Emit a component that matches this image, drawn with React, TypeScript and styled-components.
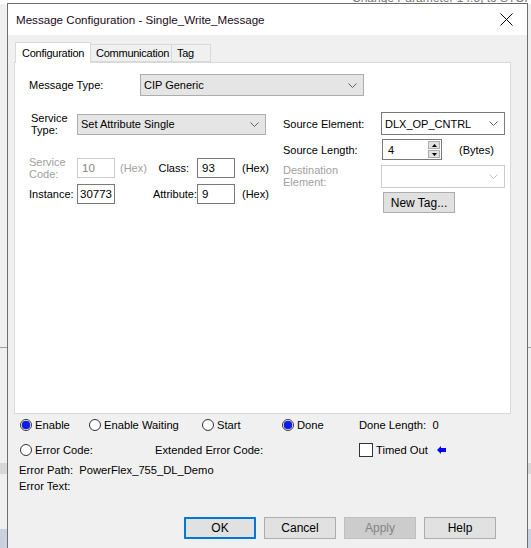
import React from 'react';
import styled, { createGlobalStyle } from 'styled-components';

const GlobalStyle = createGlobalStyle`
  html, body {
    margin: 0;
    padding: 0;
    width: 531px;
    height: 548px;
    overflow: hidden;
  }
  body {
    font-family: 'Liberation Sans', Arial, sans-serif;
    font-size: 11px;
    color: #000;
    background:
      linear-gradient(to bottom,
        #ffffff 0px, #ffffff 4px,
        #f0f0f0 4px, #f0f0f0 347px,
        #a0a0a0 347px, #a0a0a0 348px,
        #f0f0f0 348px, #f0f0f0 463px,
        #d8d8d8 463px, #d8d8d8 474px,
        #f0f0f0 474px, #f0f0f0 529px,
        #c9d2de 529px, #c9d2de 548px);
  }
`;

const Desktop = styled.div`
  position: relative;
  width: 531px;
  height: 548px;
  overflow: hidden;
`;

const DesktopText = styled.div`
  padding-left: 352px;
  margin-top: -9px;
  font-size: 12px;
  color: #7a7a7a;
  white-space: nowrap;
`;

const Window = styled.div`
  position: absolute;
  left: 7px;
  top: 3px;
  width: 519px;
  height: 570px;
  border: 1px solid #6e6e6e;
  background: #f0f0f0;
  display: flex;
  flex-direction: column;
`;

const TitleBar = styled.div`
  height: 31px;
  background: #fff;
  display: flex;
  align-items: center;
  justify-content: space-between;
  padding: 0 14px 0 8px;
  font-size: 11.6px;
  color: #1a0a1a;
`;

const CloseButton = styled.div`
  width: 14px;
  height: 14px;
  display: flex;
  align-items: center;
  justify-content: center;
`;

const Body = styled.div`
  padding: 7px 16px 0 6px;
  display: flex;
  flex-direction: column;
`;

const TabStrip = styled.div`
  display: flex;
  align-items: flex-end;
  height: 20px;
  padding-left: 1px;
`;

const Tab = styled.div<{ $active?: boolean; $w: number }>`
  width: ${(p) => p.$w}px;
  height: ${(p) => (p.$active ? 21 : 18)}px;
  margin-bottom: ${(p) => (p.$active ? -1 : 0)}px;
  margin-left: ${(p) => (p.$active ? 0 : -1)}px;
  box-sizing: border-box;
  border: 1px solid #d9d9d9;
  border-bottom: ${(p) => (p.$active ? 'none' : '1px solid #d9d9d9')};
  background: ${(p) => (p.$active ? '#fff' : '#f0f0f0')};
  position: relative;
  z-index: ${(p) => (p.$active ? 2 : 1)};
  display: flex;
  align-items: center;
  padding-left: ${(p) => (p.$active ? 6 : 5)}px;
  font-size: 11px;
  letter-spacing: -0.25px;
  white-space: nowrap;
  overflow: hidden;
`;

const Panel = styled.div`
  height: 339px;
  border: 1px solid #d9d9d9;
  background: #fff;
  position: relative;
  z-index: 1;
  padding: 11px 0 0 14px;
`;

const Row = styled.div`
  display: flex;
  align-items: center;
`;

const Label = styled.div<{ $w?: number; $disabled?: boolean }>`
  width: ${(p) => (p.$w ? `${p.$w}px` : 'auto')};
  flex-shrink: 0;
  color: ${(p) => (p.$disabled ? '#a0a0a0' : '#000')};
  line-height: 12px;
  white-space: nowrap;
`;

const Combo = styled.div<{ $w: number; $h: number; $variant: 'gray' | 'white' | 'disabled' }>`
  width: ${(p) => p.$w}px;
  height: ${(p) => p.$h}px;
  box-sizing: border-box;
  border: 1px solid
    ${(p) => (p.$variant === 'gray' ? '#adadad' : p.$variant === 'white' ? '#7a7a7a' : '#cccccc')};
  background: ${(p) => (p.$variant === 'gray' ? '#e5e5e5' : '#fff')};
  display: flex;
  align-items: center;
  justify-content: space-between;
  padding: 0 6px 0 3px;
`;

const Columns = styled.div`
  display: flex;
  margin-top: 16px;
`;

const LeftColumn = styled.div`
  width: 254px;
  display: flex;
  flex-direction: column;
`;

const RightColumn = styled.div`
  display: flex;
  flex-direction: column;
  gap: 4px;
`;

const FieldGrid = styled.div`
  display: grid;
  grid-template-columns: 48px 38px 82px 38px auto;
  grid-auto-rows: 20px;
  row-gap: 6px;
  margin-top: 22px;
  align-items: center;
`;

const TextBox = styled.div<{ $disabled?: boolean }>`
  height: 20px;
  box-sizing: border-box;
  border: 1px solid ${(p) => (p.$disabled ? '#cccccc' : '#7a7a7a')};
  background: #fff;
  color: ${(p) => (p.$disabled ? '#838383' : '#000')};
  display: flex;
  align-items: center;
  padding-left: 4px;
  font-size: 11.5px;
`;

const MidCell = styled.div`
  display: flex;
  align-items: center;
  justify-content: space-between;
  padding: 0 8px 0 5px;
`;

const RightCell = styled.div`
  display: flex;
  justify-content: flex-end;
  padding-right: 8px;
  width: 100%;
`;

const HexCell = styled.div`
  padding-left: 7px;
`;

const Spinner = styled.div`
  width: 60px;
  height: 21px;
  margin-left: 1px;
  box-sizing: border-box;
  border: 1px solid #7a7a7a;
  background: #fff;
  display: flex;
  align-items: center;
  justify-content: space-between;
  padding: 1px 1px 1px 5px;
`;

const SpinButtons = styled.div`
  width: 12px;
  height: 17px;
  display: flex;
  flex-direction: column;
  gap: 1px;
`;

const SpinButton = styled.div`
  flex: 1;
  background: #e1e1e1;
  border: 1px solid #adadad;
  display: flex;
  align-items: center;
  justify-content: center;
`;

const PushButton = styled.div<{ $w: number; $h: number; $default?: boolean; $disabled?: boolean }>`
  width: ${(p) => p.$w}px;
  height: ${(p) => p.$h}px;
  box-sizing: border-box;
  border: ${(p) => (p.$default ? '2px solid #0078d7' : p.$disabled ? '1px solid #bfbfbf' : '1px solid #adadad')};
  background: ${(p) => (p.$disabled ? '#cccccc' : '#e1e1e1')};
  color: ${(p) => (p.$disabled ? '#838383' : '#000')};
  display: flex;
  align-items: center;
  justify-content: center;
  font-size: 12px;
`;

const StatusArea = styled.div`
  padding-left: 6px;
  display: flex;
  flex-direction: column;
`;

const RadioGrid = styled.div`
  display: grid;
  grid-template-columns: 69px 113px 80px 77px auto;
  height: 14px;
  margin-top: 4px;
  align-items: center;
`;

const StatusRow = styled.div`
  display: flex;
  align-items: center;
  height: 16px;
  margin-top: 10px;
`;

const Option = styled.div<{ $w?: number }>`
  display: flex;
  align-items: center;
  gap: 3px;
  width: ${(p) => (p.$w ? `${p.$w}px` : 'auto')};
  flex-shrink: 0;
  white-space: nowrap;
  font-size: 11.2px;
`;

const CheckBox = styled.div`
  width: 14px;
  height: 14px;
  box-sizing: border-box;
  border: 1px solid #333;
  background: #fff;
`;

const InfoLine = styled.div<{ $top: number }>`
  margin-top: ${(p) => p.$top}px;
  padding-left: 5px;
  line-height: 14px;
  font-size: 11.2px;
  white-space: nowrap;
`;

const ButtonRow = styled.div`
  display: flex;
  justify-content: flex-end;
  gap: 8px;
  margin-top: 24px;
  padding-right: 15px;
`;

const Chevron: React.FC<{ color?: string }> = ({ color = '#606060' }) => (
  <svg width="9" height="5" viewBox="0 0 9 5">
    <path d="M0.5 0.5 L4.5 4.5 L8.5 0.5" fill="none" stroke={color} strokeWidth="1" />
  </svg>
);

const Radio: React.FC<{ checked?: boolean }> = ({ checked }) => (
  <svg width="12" height="12" viewBox="0 0 12 12">
    <circle cx="6" cy="6" r="5.5" fill="#fff" stroke="#333" strokeWidth="1" />
    {checked && <circle cx="6" cy="6" r="4" fill="#0a1aff" stroke="#1a1a80" strokeWidth="0.6" />}
  </svg>
);

const BlueArrow = () => (
  <svg width="9" height="8" viewBox="0 0 9 8" style={{ marginLeft: 6 }}>
    <path d="M0 4 L4 0 L4 2 L9 2 L9 6 L4 6 L4 8 Z" fill="#0000ff" />
  </svg>
);

const App: React.FC = () => {
  return (
    <>
      <GlobalStyle />
      <Desktop>
        <DesktopText>Change Parameter 14:5] to STOP to</DesktopText>
        <Window>
          <TitleBar>
            <span>Message Configuration - Single_Write_Message</span>
            <CloseButton>
              <svg width="13" height="13" viewBox="0 0 13 13">
                <path d="M0.5 0.5 L12.5 12.5 M12.5 0.5 L0.5 12.5" stroke="#000" strokeWidth="1" />
              </svg>
            </CloseButton>
          </TitleBar>

          <Body>
            <TabStrip>
              <Tab $active $w={76}>Configuration</Tab>
              <Tab $w={82}>Communication</Tab>
              <Tab $w={40}>Tag</Tab>
            </TabStrip>

            <Panel>
              <Row>
                <Label $w={111}>Message Type:</Label>
                <Combo $w={224} $h={22} $variant="gray">
                  <span>CIP Generic</span>
                  <Chevron />
                </Combo>
              </Row>

              <Columns>
                <LeftColumn>
                  <Row>
                    <Label $w={48} style={{ paddingLeft: 2, boxSizing: 'border-box' }}>
                      Service
                      <br />
                      Type:
                    </Label>
                    <Combo $w={189} $h={21} $variant="gray">
                      <span>Set Attribute Single</span>
                      <Chevron />
                    </Combo>
                  </Row>

                  <FieldGrid>
                    <Label $disabled>
                      Service
                      <br />
                      Code:
                    </Label>
                    <TextBox $disabled>10</TextBox>
                    <MidCell>
                      <Label $disabled>(Hex)</Label>
                      <Label>Class:</Label>
                    </MidCell>
                    <TextBox>93</TextBox>
                    <HexCell>(Hex)</HexCell>

                    <Label>Instance:</Label>
                    <TextBox style={{ paddingLeft: 2 }}>30773</TextBox>
                    <RightCell>
                      <Label>Attribute:</Label>
                    </RightCell>
                    <TextBox>9</TextBox>
                    <HexCell>(Hex)</HexCell>
                  </FieldGrid>
                </LeftColumn>

                <RightColumn>
                  <Row>
                    <Label $w={98}>Source Element:</Label>
                    <Combo $w={124} $h={23} $variant="white">
                      <span>DLX_OP_CNTRL</span>
                      <Chevron />
                    </Combo>
                  </Row>
                  <Row>
                    <Label $w={98}>Source Length:</Label>
                    <Spinner>
                      <span>4</span>
                      <SpinButtons>
                        <SpinButton>
                          <svg width="5" height="3" viewBox="0 0 5 3">
                            <path d="M0 3 L2.5 0 L5 3 Z" fill="#000" />
                          </svg>
                        </SpinButton>
                        <SpinButton>
                          <svg width="5" height="3" viewBox="0 0 5 3">
                            <path d="M0 0 L2.5 3 L5 0 Z" fill="#000" />
                          </svg>
                        </SpinButton>
                      </SpinButtons>
                    </Spinner>
                    <Label style={{ marginLeft: 17 }}>(Bytes)</Label>
                  </Row>
                  <Row>
                    <Label $w={98} $disabled>
                      Destination
                      <br />
                      Element:
                    </Label>
                    <Combo $w={124} $h={23} $variant="disabled">
                      <span />
                      <Chevron color="#c0c0c0" />
                    </Combo>
                  </Row>
                  <Row style={{ paddingLeft: 100 }}>
                    <PushButton $w={72} $h={21}>
                      New Tag...
                    </PushButton>
                  </Row>
                </RightColumn>
              </Columns>
            </Panel>

            <StatusArea>
              <RadioGrid>
                <Option>
                  <Radio checked />
                  Enable
                </Option>
                <Option>
                  <Radio />
                  Enable Waiting
                </Option>
                <Option>
                  <Radio />
                  Start
                </Option>
                <Option>
                  <Radio checked />
                  Done
                </Option>
                <Option>
                  Done Length:&nbsp;&nbsp;0
                </Option>
              </RadioGrid>

              <StatusRow>
                <Option $w={135}>
                  <Radio />
                  Error Code:
                </Option>
                <Option $w={204}>Extended Error Code:</Option>
                <Option>
                  <CheckBox />
                  Timed Out
                  <BlueArrow />
                </Option>
              </StatusRow>
            </StatusArea>

            <InfoLine $top={5}>Error Path:&nbsp;&nbsp;PowerFlex_755_DL_Demo</InfoLine>
            <InfoLine $top={2}>Error Text:</InfoLine>

            <ButtonRow>
              <PushButton $w={72} $h={22} $default>
                OK
              </PushButton>
              <PushButton $w={72} $h={22}>
                Cancel
              </PushButton>
              <PushButton $w={72} $h={22} $disabled>
                Apply
              </PushButton>
              <PushButton $w={72} $h={22}>
                Help
              </PushButton>
            </ButtonRow>
          </Body>
        </Window>
      </Desktop>
    </>
  );
};

export default App;
